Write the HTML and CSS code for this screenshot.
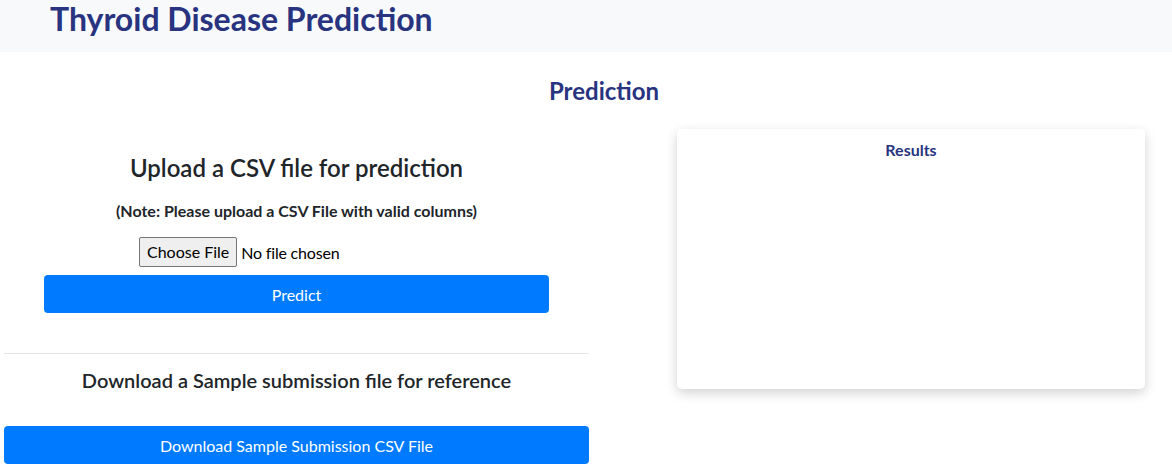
FILE: index.html
```html
<!DOCTYPE html>
<html>
<head>
<meta charset="utf-8">
<title>Thyroid Disease Prediction</title>
<link rel="stylesheet" href="styles.css">
</head>
<body>
<header class="topbar">
  <h1 class="brand">Thyroid Disease Prediction</h1>
</header>
<main class="page">
  <h2 class="section-title">Prediction</h2>
  <div class="row">
    <section class="left">
      <h3 class="upload-title">Upload a CSV file for prediction</h3>
      <p class="note">(Note: Please upload a CSV File with valid columns)</p>
      <div class="file-row">
        <span class="file-btn">Choose File</span>
        <span class="file-label">No file chosen</span>
      </div>
      <button class="btn btn-predict">Predict</button>
      <hr class="divider">
      <h4 class="download-title">Download a Sample submission file for reference</h4>
      <button class="btn btn-download">Download Sample Submission CSV File</button>
    </section>
    <aside class="card">
      <h5 class="card-title">Results</h5>
    </aside>
  </div>
</main>
</body>
</html>
```

FILE: styles.css
```css
* { box-sizing: border-box; }
html, body {
  margin: 0;
  padding: 0;
  background: #ffffff;
  font-family: Lato, "Liberation Sans", sans-serif;
  color: #212529;
}
.topbar {
  background: #f8f9fa;
  height: 52px;
  padding-left: 50px;
}
.brand {
  margin: 0;
  font-size: 32px;
  font-weight: 700;
  line-height: 37px;
  color: #283480;
}
.page {
  padding: 0 0 0 4px;
}
.section-title {
  margin: 24px 0 0 0;
  text-align: center;
  font-size: 24px;
  font-weight: 700;
  line-height: 30px;
  color: #283480;
  padding-left: 32px;
}
.row {
  display: flex;
  align-items: flex-start;
}
.left {
  width: 585px;
  display: flex;
  flex-direction: column;
  align-items: center;
  padding-top: 47px;
}
.upload-title {
  margin: 0;
  font-size: 24px;
  font-weight: 600;
  line-height: 30px;
  color: #212529;
}
.note {
  margin: 18px 0 0 0;
  font-size: 16px;
  font-weight: 700;
  line-height: 19px;
  color: #212529;
}
.file-row {
  margin-top: 17px;
  display: flex;
  align-items: center;
  width: 505px;
  padding-left: 95px;
  font-size: 16px;
}
.file-btn {
  display: inline-block;
  height: 30px;
  line-height: 28px;
  padding: 0 7px;
  border: 1px solid #767676;
  border-radius: 2px;
  background: #efefef;
  color: #000;
  font-size: 16px;
}
.file-label {
  margin-left: 4px;
  color: #000;
  font-size: 16px;
  letter-spacing: -0.2px;
}
.btn {
  border: 0;
  border-radius: 4px;
  background: #007bff;
  color: #ffffff;
  font-family: Lato, "Liberation Sans", sans-serif;
  font-size: 16px;
  height: 38px;
  cursor: pointer;
}
.btn-predict {
  margin-top: 8px;
  width: 505px;
}
.divider {
  margin: 40px 0 0 0;
  width: 585px;
  border: 0;
  border-top: 1px solid #e5e5e5;
}
.download-title {
  margin: 14px 0 0 0;
  font-size: 20px;
  font-weight: 600;
  line-height: 24px;
  color: #212529;
}
.btn-download {
  margin-top: 34px;
  width: 585px;
}
.card {
  margin-left: 88px;
  margin-top: 23px;
  width: 468px;
  height: 260px;
  background: #fff;
  border-radius: 5px;
  box-shadow: 0 4px 12px rgba(0,0,0,0.18);
  text-align: center;
}
.card-title {
  margin: 0;
  padding-top: 11px;
  font-size: 16px;
  font-weight: 700;
  line-height: 19px;
  color: #283480;
}
```
